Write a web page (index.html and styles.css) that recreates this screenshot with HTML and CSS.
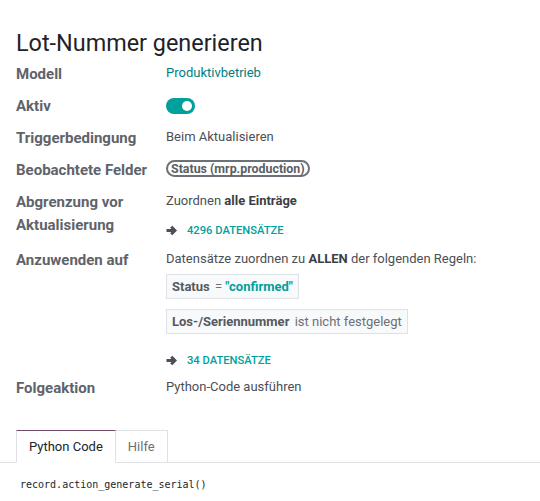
FILE: index.html
```html
<!DOCTYPE html>
<html lang="de">
<head>
<meta charset="utf-8">
<title>Lot-Nummer generieren</title>
<link rel="stylesheet" href="styles.css">
</head>
<body>
<div class="sheet">
  <h1 class="title">Lot-Nummer generieren</h1>
  <div class="fields">
    <div class="label">Modell</div>
    <div class="value"><span class="link">Produktivbetrieb</span></div>

    <div class="label">Aktiv</div>
    <div class="value"><span class="toggle"><span class="knob"></span></span></div>

    <div class="label">Triggerbedingung</div>
    <div class="value">Beim Aktualisieren</div>

    <div class="label">Beobachtete Felder</div>
    <div class="value"><span class="badge">Status (mrp.production)</span></div>

    <div class="label">Abgrenzung vor Aktualisierung</div>
    <div class="value stack">
      <div>Zuordnen <b>alle Einträge</b></div>
      <div class="records"><svg class="arrow" viewBox="0 0 11 11" width="11" height="11"><path d="M0.5 5.5H8.6M5.2 1.8 8.9 5.5 5.2 9.2" fill="none" stroke="#4b4f56" stroke-width="3"/></svg><span>4296 Datensätze</span></div>
    </div>

    <div class="label">Anzuwenden auf</div>
    <div class="value stack tight">
      <div>Datensätze zuordnen zu <b>ALLEN</b> der folgenden Regeln:</div>
      <div class="rule"><b>Status</b> <span class="op">=</span> <span class="lit">"confirmed"</span></div>
      <div class="rule"><b>Los-/Seriennummer</b> <span class="op">ist nicht festgelegt</span></div>
      <div class="records far"><svg class="arrow" viewBox="0 0 11 11" width="11" height="11"><path d="M0.5 5.5H8.6M5.2 1.8 8.9 5.5 5.2 9.2" fill="none" stroke="#4b4f56" stroke-width="3"/></svg><span>34 Datensätze</span></div>
    </div>

    <div class="label">Folgeaktion</div>
    <div class="value">Python-Code ausführen</div>
  </div>

  <div class="tabs">
    <div class="tab active">Python Code</div>
    <div class="tab">Hilfe</div>
  </div>
</div>
<pre class="code">record.action_generate_serial()</pre>
</body>
</html>
```
FILE: styles.css
```css
* { box-sizing: border-box; }
html, body { margin: 0; padding: 0; background: #fff; }
body {
  font-family: Roboto, "Noto Sans", sans-serif;
  color: #4b4f56;
  width: 540px;
  height: 501px;
  overflow: hidden;
}
.sheet { padding: 27px 0 0 16px; }
.title {
  margin: 0;
  font-size: 23.4px;
  font-weight: 400;
  line-height: 32px;
  color: #1f2329;
}
.fields {
  display: grid;
  grid-template-columns: 150px 1fr;
}
.label {
  font-size: 15px;
  font-weight: 700;
  color: #5f636a;
  line-height: 23px;
  padding: 4px 6px 5px 0;
}
.value {
  font-size: 13px;
  line-height: 23px;
  padding: 2px 0 7px;
  color: #4b4f56;
}
.value b { font-weight: 700; color: #3b3f45; }
.link { color: #017e84; }
.toggle {
  display: inline-block;
  vertical-align: middle;
  width: 29px;
  height: 16px;
  border-radius: 8px;
  background: #00a09d;
  position: relative;
}
.knob {
  position: absolute;
  right: 3px;
  top: 3px;
  width: 10px;
  height: 10px;
  border-radius: 50%;
  background: #fff;
}
.badge {
  display: inline-block;
  border: 2px solid #6c7077;
  border-radius: 10px;
  padding: 0 3px;
  line-height: 13px;
  font-weight: 700;
  font-size: 12.4px;
  color: #5a5e65;
}
.stack { display: flex; flex-direction: column; align-items: flex-start; padding-bottom: 5px; }
.stack.tight { padding-bottom: 3px; }
.records {
  display: flex;
  align-items: center;
  gap: 10px;
  margin-top: 9px;
  line-height: 19px;
  font-size: 11.2px;
  font-weight: 500;
  text-transform: uppercase;
  color: #00a09d;
}
.records.far { margin-top: 17px; }
.arrow { flex: none; }
.rule {
  margin-top: 4px;
  border: 1px solid #dee2e6;
  background: #f8f9fa;
  padding: 0 5px;
  line-height: 23px;
  color: #60646b;
}
.rule b { color: #55595f; margin-right: 2px; }
.rule + .rule { margin-top: 10px; }
.op { color: #6c7077; }
.lit { color: #00a09d; font-weight: 700; }
.tabs {
  display: flex;
  margin-top: 24.5px;
  margin-left: -16px;
  padding-left: 16px;
  border-bottom: 1px solid #dee2e6;
}
.tab {
  font-size: 13px;
  color: #6c7077;
  padding: 0 12px;
  line-height: 31px;
  border: 1px solid #dee2e6;
  margin-bottom: -1px;
  background: #fff;
}
.tab.active {
  color: #212529;
  border-top-color: #714b67;
  border-bottom-color: #fff;
}
.tab + .tab { border-left: none; }
.code {
  margin: 16px 0 0 20px;
  font-family: "DejaVu Sans Mono", monospace;
  font-size: 10px;
  line-height: 12px;
  color: #212529;
}
```
